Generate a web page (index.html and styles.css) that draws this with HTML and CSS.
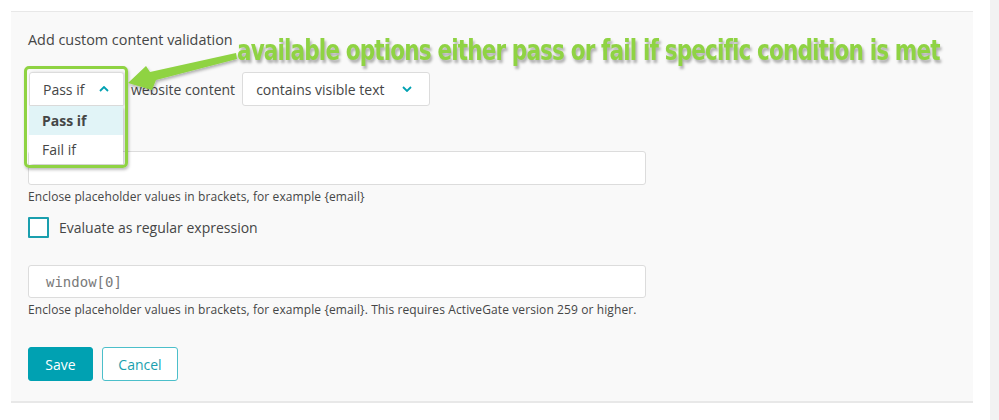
FILE: index.html
```html
<!DOCTYPE html>
<html>
<head>
<meta charset="utf-8">
<link rel="stylesheet" href="styles.css">
</head>
<body>
<div class="page">
  <div class="panel">
    <div class="title">Add custom content validation</div>
    <div class="rule-row">
      <div class="select-wrap">
        <div class="select select-open">
          <span>Pass if</span>
          <svg class="chev" width="10" height="6" viewBox="0 0 10 6"><path d="M1 5 L5 1 L9 5" fill="none" stroke="#00a1b2" stroke-width="1.8"/></svg>
        </div>
        <div class="menu">
          <div class="menu-item active">Pass if</div>
          <div class="menu-item">Fail if</div>
        </div>
      </div>
      <span class="row-label">website content</span>
      <div class="select select-wide">
        <span>contains visible text</span>
        <svg class="chev" width="10" height="6" viewBox="0 0 10 6"><path d="M1 1 L5 5 L9 1" fill="none" stroke="#00a1b2" stroke-width="1.8"/></svg>
      </div>
    </div>
    <div class="input input-first"></div>
    <div class="helper">Enclose placeholder values in brackets, for example {email}</div>
    <label class="check-row"><span class="checkbox"></span><span>Evaluate as regular expression</span></label>
    <div class="input input-second"><span class="placeholder">window[0]</span></div>
    <div class="helper">Enclose placeholder values in brackets, for example {email}. This requires ActiveGate version 259 or higher.</div>
    <div class="buttons">
      <button class="btn btn-primary">Save</button>
      <button class="btn btn-secondary">Cancel</button>
    </div>
  </div>
  <div class="scroll-strip"></div>
  <div class="highlight"></div>
  <svg class="arrow" width="999" height="420" viewBox="0 0 999 420">
    <defs>
      <filter id="sh" x="-20%" y="-50%" width="140%" height="200%">
        <feDropShadow dx="1" dy="2" stdDeviation="1.5" flood-color="#000" flood-opacity="0.3"/>
      </filter>
    </defs>
    <polygon filter="url(#sh)" fill="#8fd343" points="128,83 146,66 150,72 236,53 237,59 156,80 152,90"/>
  </svg>
  <div class="annotation">available options either pass or fail if specific condition is met</div>
</div>
</body>
</html>
```
FILE: styles.css
```css
html, body {
  margin: 0;
  padding: 0;
  background: #ffffff;
}
body {
  font-family: "Open Sans", "Noto Sans", sans-serif;
  color: #454646;
  font-size: 14px;
}
.page {
  position: relative;
  width: 999px;
  height: 420px;
  display: flex;
  overflow: hidden;
}
.panel {
  margin: 11px 0 0 11px;
  width: 945px;
  height: 389px;
  padding: 0 0 0 17px;
  background: #f9f9f9;
  border-top: 1px solid #e8e8e8;
  border-bottom: 2px solid #e8e8e8;
  display: flex;
  flex-direction: column;
  align-items: flex-start;
}
.scroll-strip {
  margin-left: 17px;
  width: 9px;
  height: 420px;
  background: #f2f2f2;
}
.title {
  margin-top: 18px;
  line-height: 20px;
  font-size: 14.4px;
}
.rule-row {
  margin-top: 22px;
  display: flex;
  align-items: center;
  gap: 7px;
}
.select-wrap {
  position: relative;
}
.select {
  box-sizing: border-box;
  height: 34px;
  background: #fff;
  border: 1px solid #dcdcdc;
  border-radius: 3px;
  display: flex;
  align-items: center;
  justify-content: space-between;
  padding: 0 14px 0 13px;
  font-size: 14px;
}
.select-open {
  width: 95px;
  margin-left: 1px;
  border-radius: 3px 3px 0 0;
  box-shadow: 2px 0 3px rgba(0,0,0,0.12);
}
.select-wide {
  width: 188px;
  padding: 0 17px 0 13px;
}
.chev {
  display: block;
}
.row-label {
  font-size: 14px;
}
.menu {
  position: absolute;
  left: 1px;
  top: 34px;
  width: 94px;
  background: #fff;
  box-shadow: 2px 2px 3px rgba(0,0,0,0.2);
  z-index: 2;
}
.menu-item {
  height: 29px;
  line-height: 29px;
  padding-left: 13px;
  font-size: 14px;
}
.menu-item.active {
  background: #e1f4f7;
  font-weight: 700;
}
.input {
  box-sizing: border-box;
  width: 618px;
  height: 34px;
  background: #fff;
  border: 1px solid #dcdcdc;
  border-radius: 3px;
  display: flex;
  align-items: center;
}
.input-first {
  margin-top: 45px;
}
.input-second {
  margin-top: 27px;
  height: 33px;
}
.placeholder {
  font-family: "DejaVu Sans Mono", monospace;
  font-size: 14px;
  color: #7a7a7a;
  padding-left: 17px;
}
.helper {
  margin-top: 4px;
  font-size: 12px;
  line-height: 16px;
  letter-spacing: 0.1px;
  color: #454646;
}
.check-row {
  margin-top: 12px;
  display: flex;
  align-items: center;
  gap: 10px;
  font-size: 14px;
  line-height: 21px;
}
.checkbox {
  box-sizing: border-box;
  width: 21px;
  height: 21px;
  border: 2px solid #1a9fae;
  background: #fff;
  border-radius: 1px;
}
.buttons {
  margin-top: 29px;
  display: flex;
  gap: 9px;
}
.btn {
  box-sizing: border-box;
  height: 34px;
  border-radius: 3px;
  font-family: "Open Sans", "Noto Sans", sans-serif;
  font-size: 14px;
  padding: 0;
  cursor: pointer;
}
.btn-primary {
  width: 65px;
  background: #00a1b2;
  border: 1px solid #00a1b2;
  color: #fff;
}
.btn-secondary {
  width: 76px;
  background: #fff;
  border: 1px solid #4cbfca;
  color: #1a9fae;
}
.highlight {
  position: absolute;
  left: 24px;
  top: 66px;
  width: 98px;
  height: 96px;
  border: 3px solid #8fd343;
  border-radius: 5px;
  box-shadow: 1px 2px 3px rgba(0,0,0,0.25);
  z-index: 3;
}
.arrow {
  position: absolute;
  left: 0;
  top: 0;
  z-index: 3;
}
.annotation {
  position: absolute;
  left: 237px;
  top: 31px;
  font-family: "DejaVu Sans Condensed", "DejaVu Sans", sans-serif;
  font-weight: 700;
  font-size: 29px;
  line-height: 38px;
  color: #8fd343;
  letter-spacing: -1px;
  white-space: nowrap;
  text-shadow: 2px 3px 3px rgba(0,0,0,0.3);
  transform: scaleX(0.824);
  transform-origin: left top;
  z-index: 3;
}
```
